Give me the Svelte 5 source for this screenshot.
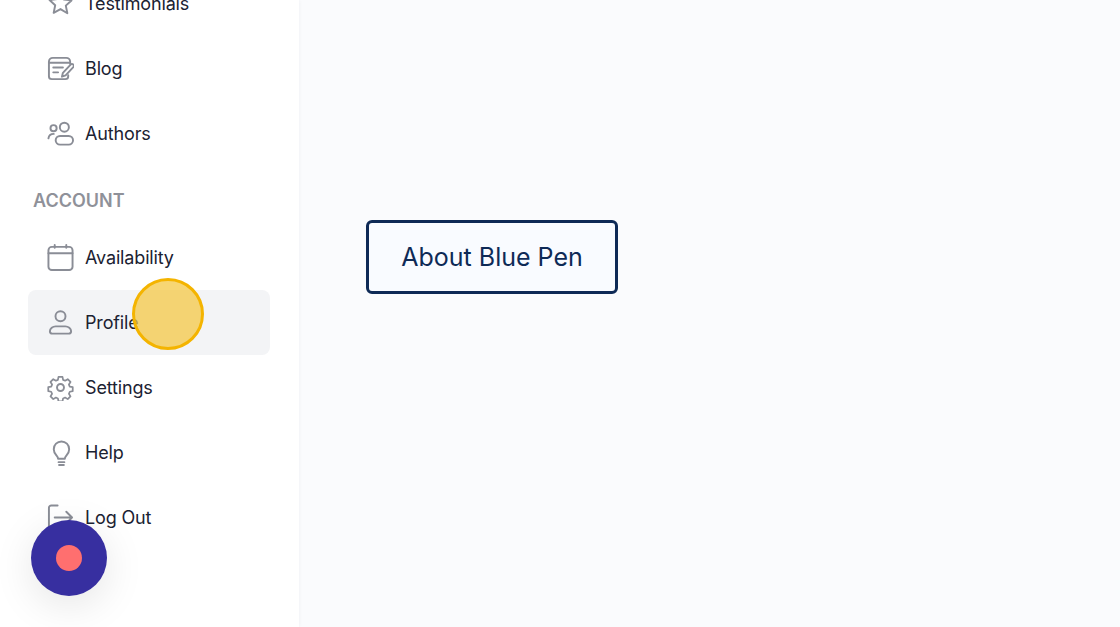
<script>
  const topItems = [
    { label: "Testimonials", icon: "star" },
    { label: "Blog", icon: "blog" },
    { label: "Authors", icon: "authors" },
  ];
  const accountItems = [
    { label: "Availability", icon: "calendar" },
    { label: "Profile", icon: "user", active: true },
    { label: "Settings", icon: "gear" },
    { label: "Help", icon: "bulb" },
    { label: "Log Out", icon: "logout" },
  ];
</script>

{#snippet navIcon(name)}
  <svg class="icon" viewBox="0 0 28 28" fill="none" stroke="currentColor" stroke-width="2" stroke-linecap="round" stroke-linejoin="round">
    {#if name === "star"}
      <path d="M14 2.5l3.4 7.4 8 .9-5.9 5.4 1.6 7.9L14 19.8l-7.1 3.9 1.6-7.9-5.9-5.4 8-.9z" />
    {:else if name === "blog"}
      <path d="M24 9V7a4 4 0 0 0-4-4H6a4 4 0 0 0-4 4v15a3 3 0 0 0 3 3h14a3 3 0 0 0 3-3v-1" />
      <path d="M2.5 8h21M6.5 13h10M6.5 18h5" />
      <path d="M15.5 22.5l1-4 8-8.5a1.9 1.9 0 0 1 2.8 2.6l-8 8.6z" />
    {:else if name === "authors"}
      <circle cx="18" cy="7.5" r="4.7" />
      <circle cx="6.8" cy="8.5" r="3.2" />
      <rect x="9" y="16.5" width="18" height="9" rx="4.5" />
      <path d="M1.5 19c.4-3 2.6-4.6 5.5-4.6" />
    {:else if name === "calendar"}
      <rect x="1.5" y="3" width="25" height="24" rx="3.5" />
      <path d="M1.5 9.5h25M8 1v3M20 1v3" />
    {:else if name === "user"}
      <circle cx="14" cy="7.5" r="5.2" />
      <path d="M3 23c0-3 3-5 6-5h10c3 0 6 2 6 5a2.5 2.5 0 0 1-2.5 2.5h-17A2.5 2.5 0 0 1 3 23z" />
    {:else if name === "gear"}
      <path d="M11.7 1.8h4.6l.7 3.4 2.3 1 3-1.8 3.2 3.2-1.8 3 1 2.3 3.4.7v4.6l-3.4.7-1 2.3 1.8 3-3.2 3.2-3-1.8-2.3 1-.7 3.4h-4.6l-.7-3.4-2.3-1-3 1.8-3.2-3.2 1.8-3-1-2.3-3.4-.7v-4.6l3.4-.7 1-2.3-1.8-3L5.7 4.4l3 1.8 2.3-1z" transform="translate(1.4 1.4) scale(.9)" />
      <circle cx="14" cy="14" r="3.6" />
    {:else if name === "bulb"}
      <path d="M11.5 20.5c0-3-4.5-4.5-4.5-10a8 8 0 0 1 16 0c0 5.5-4.5 7-4.5 10z" />
      <path d="M12 24h6M12.5 27h5" />
    {:else if name === "logout"}
      <path d="M11 1.5H4.5A2.5 2.5 0 0 0 2 4v20a2.5 2.5 0 0 0 2.5 2.5H11" />
      <path d="M8 14h18M20 8l6 6-6 6" />
    {/if}
  </svg>
{/snippet}

{#snippet navRow(item)}
  <li class="row" class:active={item.active}>
    <span class="icon-slot">{@render navIcon(item.icon)}</span>
    <span>{item.label}</span>
  </li>
{/snippet}

<div class="page">
  <aside class="sidebar">
    <ul class="list first">
      {#each topItems as item}
        {@render navRow(item)}
      {/each}
    </ul>
    <h2>ACCOUNT</h2>
    <ul class="list">
      {#each accountItems as item}
        {@render navRow(item)}
      {/each}
    </ul>
  </aside>

  <main class="content">
    <button class="about">About Blue Pen</button>
  </main>

  <div class="cursor"></div>
  <div class="record"><span></span></div>
</div>

<style>
  :global(body) {
    margin: 0;
    overflow: hidden;
  }
  .page {
    display: flex;
    height: 627px;
    width: 1120px;
    overflow: hidden;
    position: relative;
    font-family: Inter, "Liberation Sans", sans-serif;
    background: #fafbfd;
  }
  .sidebar {
    width: 299px;
    flex: none;
    box-sizing: border-box;
    background: #fff;
    padding: 0 29px 0 28px;
    box-shadow: 0 0 4px rgba(30, 40, 70, 0.05);
  }
  .list {
    list-style: none;
    margin: 0;
    padding: 0;
  }
  .first {
    margin-top: -29px;
  }
  .row {
    display: flex;
    align-items: center;
    height: 65px;
    padding-left: 19px;
    gap: 11px;
    border-radius: 8px;
    font-size: 18px;
    letter-spacing: -0.15px;
    color: #1b2232;
  }
  .row.active {
    background: #f3f4f6;
  }
  .icon-slot {
    display: flex;
    color: #8a8d96;
  }
  .icon {
    width: 27px;
    height: 27px;
  }
  h2 {
    margin: 0;
    padding: 20px 0 0 5px;
    height: 39px;
    line-height: 30px;
    font-size: 18px;
    font-weight: 600;
    color: #8f9199;
  }
  .content {
    flex: 1;
    padding: 220px 0 0 67px;
  }
  .about {
    display: block;
    width: 252px;
    height: 74px;
    box-sizing: border-box;
    border: 3px solid #0e2a56;
    border-radius: 6px;
    background: #f9fbff;
    color: #0e2a56;
    font-family: inherit;
    font-size: 25px;
  }
  .cursor {
    position: absolute;
    left: 132px;
    top: 278px;
    width: 72px;
    height: 72px;
    box-sizing: border-box;
    border-radius: 50%;
    border: 3px solid #f4b400;
    background: rgba(244, 200, 70, 0.75);
  }
  .record {
    position: absolute;
    left: 31px;
    top: 520px;
    width: 76px;
    height: 76px;
    border-radius: 50%;
    background: #372fa0;
    display: flex;
    align-items: center;
    justify-content: center;
    box-shadow: 0 10px 40px rgba(0, 0, 0, 0.1);
  }
  .record span {
    width: 26px;
    height: 26px;
    border-radius: 50%;
    background: #ff6f6f;
  }
</style>
